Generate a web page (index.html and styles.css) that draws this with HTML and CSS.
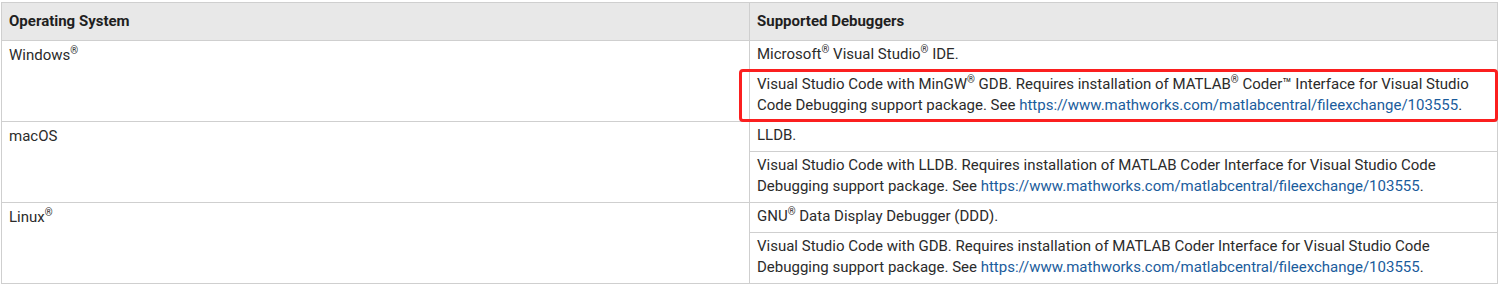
FILE: index.html
```html
<!DOCTYPE html>
<html lang="en">
<head>
<meta charset="utf-8">
<title>Supported Debuggers</title>
<link rel="stylesheet" href="styles.css">
</head>
<body>
<div class="page">
  <table class="debuggers">
    <thead>
      <tr>
        <th class="col-os">Operating System</th>
        <th>Supported Debuggers</th>
      </tr>
    </thead>
    <tbody>
      <tr>
        <td class="os" rowspan="2">Windows<sup>®</sup></td>
        <td class="single">Microsoft<sup>®</sup> Visual Studio<sup>®</sup> IDE.</td>
      </tr>
      <tr>
        <td class="double highlighted">Visual Studio Code with MinGW<sup>®</sup> GDB. Requires installation of MATLAB<sup>®</sup> Coder™ Interface for Visual Studio Code Debugging support package. See <a href="#">https://www.mathworks.com/matlabcentral/fileexchange/103555</a>.<span class="callout"></span></td>
      </tr>
      <tr>
        <td class="os" rowspan="2">macOS</td>
        <td class="single">LLDB.</td>
      </tr>
      <tr>
        <td class="double">Visual Studio Code with LLDB. Requires installation of MATLAB Coder Interface for Visual Studio Code Debugging support package. See <a href="#">https://www.mathworks.com/matlabcentral/fileexchange/103555</a>.</td>
      </tr>
      <tr>
        <td class="os" rowspan="2">Linux<sup>®</sup></td>
        <td class="single">GNU<sup>®</sup> Data Display Debugger (DDD).</td>
      </tr>
      <tr>
        <td class="double">Visual Studio Code with GDB. Requires installation of MATLAB Coder Interface for Visual Studio Code Debugging support package. See <a href="#">https://www.mathworks.com/matlabcentral/fileexchange/103555</a>.</td>
      </tr>
    </tbody>
  </table>
</div>
</body>
</html>
```

FILE: styles.css
```css
html, body {
  margin: 0;
  padding: 0;
  background: #ffffff;
}

.page {
  padding: 2px 4px 0 1px;
  font-family: Roboto, "Liberation Sans", Arial, sans-serif;
  font-size: 15px;
  line-height: 21px;
  color: #2b2b2b;
}

.debuggers {
  width: 1497px;
  border-collapse: collapse;
  table-layout: fixed;
  border: 1px solid #cfcfcf;
}

.debuggers th,
.debuggers td {
  border: 1px solid #cfcfcf;
  text-align: left;
  vertical-align: top;
  padding: 3px 8px 5px 7px;
}

.debuggers th {
  background: #e8e8e8;
  font-weight: 700;
  color: #1f1f1f;
  padding-top: 8px;
  padding-bottom: 8px;
}

.col-os {
  width: 732px;
}

.debuggers td.os {
  padding-top: 4px;
}

sup {
  font-size: 10px;
  line-height: 0;
  vertical-align: 0;
  position: relative;
  top: -6px;
}

a {
  color: #1a5c9c;
  text-decoration: none;
}

.highlighted {
  position: relative;
}

.callout {
  position: absolute;
  top: -2px;
  left: -11px;
  right: -1px;
  bottom: -1px;
  border: 3px solid #fb1f1f;
  border-radius: 4px;
  pointer-events: none;
}
```
